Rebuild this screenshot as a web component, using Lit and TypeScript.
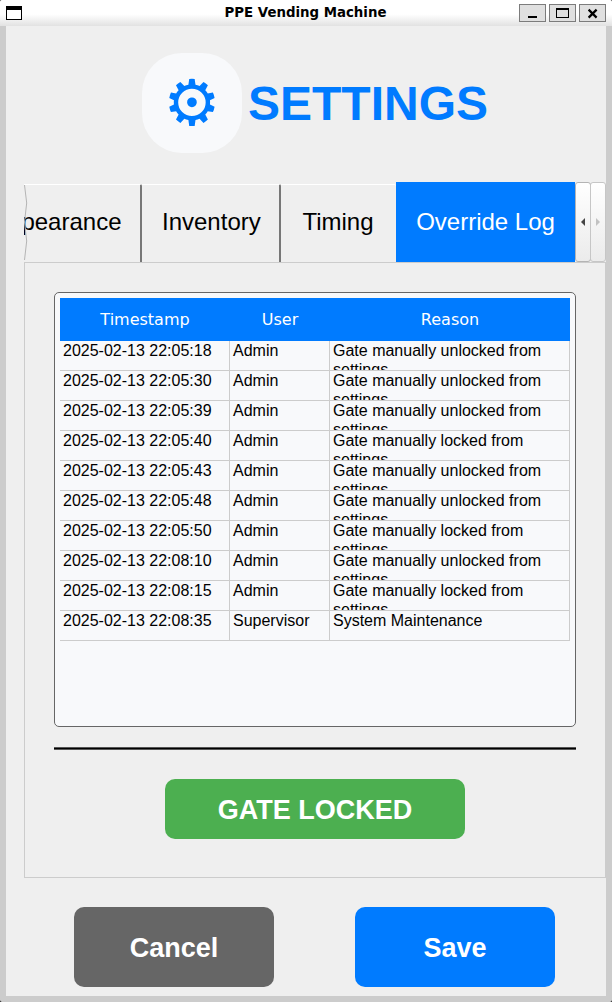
import { LitElement, html, css } from "lit";
import { customElement, property, state } from "lit/decorators.js";
import { classMap } from "lit/directives/class-map.js";

interface LogEntry {
  time: string;
  user: string;
  reason: string;
}

const UNLOCKED = "Gate manually unlocked from settings";
const LOCKED = "Gate manually locked from settings";

const LOG: LogEntry[] = [
  { time: "2025-02-13 22:05:18", user: "Admin", reason: UNLOCKED },
  { time: "2025-02-13 22:05:30", user: "Admin", reason: UNLOCKED },
  { time: "2025-02-13 22:05:39", user: "Admin", reason: UNLOCKED },
  { time: "2025-02-13 22:05:40", user: "Admin", reason: LOCKED },
  { time: "2025-02-13 22:05:43", user: "Admin", reason: UNLOCKED },
  { time: "2025-02-13 22:05:48", user: "Admin", reason: UNLOCKED },
  { time: "2025-02-13 22:05:50", user: "Admin", reason: LOCKED },
  { time: "2025-02-13 22:08:10", user: "Admin", reason: UNLOCKED },
  { time: "2025-02-13 22:08:15", user: "Admin", reason: LOCKED },
  { time: "2025-02-13 22:08:35", user: "Supervisor", reason: "System Maintenance" },
];

@customElement("title-bar")
class TitleBar extends LitElement {
  @property() caption = "";

  static styles = css`
    :host {
      display: grid;
      grid-template-columns: 1fr auto 1fr;
      height: 26px;
      box-sizing: border-box;
      padding: 0 6px;
      background: linear-gradient(#fff 0, #fff 55%, #e2e2e2 100%);
      font: bold 13.33px/16px "DejaVu Sans", sans-serif;
      color: #000;
    }
    .menu {
      display: block;
      margin-top: 6px;
    }
    .caption {
      margin-top: 5px;
      padding-right: 1px;
      white-space: nowrap;
    }
    .controls {
      display: flex;
      justify-content: flex-end;
      gap: 3px;
      margin-top: 4px;
    }
    .control {
      width: 27px;
      height: 18px;
      box-sizing: border-box;
      border: 1px solid #7c7c7c;
      background: #e0e0e0;
    }
    .control svg {
      display: block;
    }
  `;

  render() {
    return html`
      <svg class="menu" width="16" height="14" shape-rendering="crispEdges">
        <rect width="16" height="14" fill="#000" />
        <rect x="1" y="4" width="14" height="9" fill="#fff" />
      </svg>
      <div class="caption">${this.caption}</div>
      <div class="controls">
        <div class="control">
          <svg width="25" height="16" shape-rendering="crispEdges">
            <rect x="8" y="11" width="9" height="2" fill="#000" />
          </svg>
        </div>
        <div class="control">
          <svg width="25" height="16" shape-rendering="crispEdges">
            <path fill="#000" fill-rule="evenodd" d="M6 3h13v10H6zM7 5v7h11V5z" />
          </svg>
        </div>
        <div class="control">
          <svg width="25" height="16">
            <path d="M8.6 4.6l8 8M16.6 4.6l-8 8" stroke="#000" stroke-width="2.2" />
          </svg>
        </div>
      </div>
    `;
  }
}

@customElement("tab-strip")
class TabStrip extends LitElement {
  @property() active = "";

  static styles = css`
    :host {
      display: flex;
      height: 80px;
      position: relative;
      font: 24px/28px "Liberation Sans", Arial, sans-serif;
      color: #000;
    }
    .tabs {
      display: flex;
      flex: 1;
      justify-content: flex-end;
      align-items: flex-end;
      overflow: hidden;
    }
    .tab {
      box-sizing: border-box;
      flex: none;
      height: 78px;
      padding: 23px 18.5px 0 20px;
      border-top: 1px solid #fff;
      border-right: 2px solid #777;
      border-top-right-radius: 2px;
      white-space: nowrap;
      text-align: center;
    }
    .inventory {
      width: 139px;
    }
    .timing {
      width: 115px;
      border-right: 0;
      padding: 23px 1px 0 0;
    }
    .active {
      width: 179px;
      height: 80px;
      border: 0;
      border-radius: 0;
      padding: 26px 0 0;
      background: #007bff;
      color: #fff;
    }
    .tear {
      position: absolute;
      left: 0;
      top: 2px;
    }
    .scroll {
      display: flex;
    }
    .arrow {
      box-sizing: border-box;
      width: 16px;
      height: 80px;
      border: 1px solid #b4b4b4;
      border-radius: 3px;
      background: linear-gradient(#fff, #ebebeb);
    }
    .arrow + .arrow {
      margin-left: -1px;
      border-color: #c6c6c6;
    }
    .arrow svg {
      display: block;
    }
  `;

  render() {
    const tabs = ["Appearance", "Inventory", "Timing", "Override Log"];
    return html`
      <div class="tabs">
        ${tabs.map(
          (name) => html`<div
            class=${classMap({
              tab: true,
              [name.toLowerCase().replace(" ", "-")]: true,
              active: name === this.active,
            })}
          >${name}</div>`
        )}
      </div>
      <svg class="tear" width="6" height="78">
        <path d="M.5 1L2.7 19L.5 38L2.7 57L.5 76" fill="none" stroke="#b4b4b4" />
      </svg>
      <div class="scroll">
        <div class="arrow">
          <svg width="14" height="78"><path d="M9 35v8l-4-4z" fill="#444" /></svg>
        </div>
        <div class="arrow">
          <svg width="14" height="78"><path d="M5 35v8l4-4z" fill="#c2c2c2" /></svg>
        </div>
      </div>
    `;
  }
}

@customElement("log-table")
class LogTable extends LitElement {
  @property({ attribute: false }) entries: LogEntry[] = [];

  static styles = css`
    :host {
      display: block;
      box-sizing: border-box;
      height: 435px;
      padding: 5px;
      border: 1px solid #666;
      border-radius: 5px;
      background: #f8f9fb;
      font: 16px/19px "Liberation Sans", Arial, sans-serif;
      color: #000;
    }
    .row {
      display: grid;
      grid-template-columns: 170px 100px 240px;
      height: 30px;
    }
    .head {
      height: 43px;
      background: #007bff;
      color: #fff;
      font: 16px/43px "DejaVu Sans", sans-serif;
      text-align: center;
    }
    .cell {
      box-sizing: border-box;
      height: 30px;
      padding: 0 3px;
      border-right: 1px solid #ccc;
      border-bottom: 1px solid #ccc;
      overflow: hidden;
    }
  `;

  render() {
    return html`
      <div class="row head"><div>Timestamp</div><div>User</div><div>Reason</div></div>
      ${this.entries.map(
        (e) => html`<div class="row">
          <div class="cell">${e.time}</div>
          <div class="cell">${e.user}</div>
          <div class="cell">${e.reason}</div>
        </div>`
      )}
    `;
  }
}

@customElement("app-root")
class AppRoot extends LitElement {
  @state() private locked = true;

  static styles = css`
    :host {
      display: block;
      width: 612px;
      height: 1002px;
      overflow: hidden;
      background: #000;
      font-family: "Liberation Sans", Arial, sans-serif;
    }
    .window {
      height: 1002px;
      box-sizing: border-box;
      background: #ccc;
      border-radius: 2px;
      overflow: hidden;
    }
    .content {
      height: 970px;
      margin: 0 6px;
      box-sizing: border-box;
      padding: 27px 0 0 18px;
      background: #efefef;
    }
    .header {
      display: flex;
      align-items: center;
      gap: 6px;
      padding-left: 118px;
      height: 100px;
      margin-bottom: 29px;
    }
    .badge {
      width: 100px;
      height: 100px;
      border-radius: 40px;
      background: #f8f9fb;
      color: #007bff;
      font: 64px/100px "DejaVu Sans", sans-serif;
      text-align: center;
    }
    .title {
      padding-top: 2px;
      font-size: 48px;
      line-height: 56px;
      font-weight: bold;
      color: #007bff;
    }
    .pane {
      box-sizing: border-box;
      height: 616px;
      padding: 29px 29px 0;
      border: 1px solid #ccc;
    }
    .rule {
      height: 1px;
      margin: 20px 0 29px;
      background: #000;
      border-top: 1px solid #555;
      border-bottom: 1px solid #555;
    }
    .button {
      border-radius: 10px;
      color: #fff;
      font-size: 27px;
      font-weight: bold;
      text-align: center;
    }
    .gate {
      width: 300px;
      height: 60px;
      line-height: 62px;
      margin: 0 auto;
      background: #4caf50;
    }
    .actions {
      display: flex;
      gap: 81px;
      padding: 29px 0 0 50px;
    }
    .action {
      width: 200px;
      height: 80px;
      line-height: 82px;
    }
    .cancel {
      background: #666;
    }
    .save {
      background: #007bff;
    }
  `;

  render() {
    return html`
      <div class="window">
        <title-bar caption="PPE Vending Machine"></title-bar>
        <div class="content">
          <div class="header">
            <div class="badge">⚙</div>
            <div class="title">SETTINGS</div>
          </div>
          <tab-strip active="Override Log"></tab-strip>
          <div class="pane">
            <log-table .entries=${LOG}></log-table>
            <div class="rule"></div>
            <div class="button gate">${this.locked ? "GATE LOCKED" : "GATE UNLOCKED"}</div>
          </div>
          <div class="actions">
            <div class="button action cancel">Cancel</div>
            <div class="button action save">Save</div>
          </div>
        </div>
      </div>
    `;
  }
}
